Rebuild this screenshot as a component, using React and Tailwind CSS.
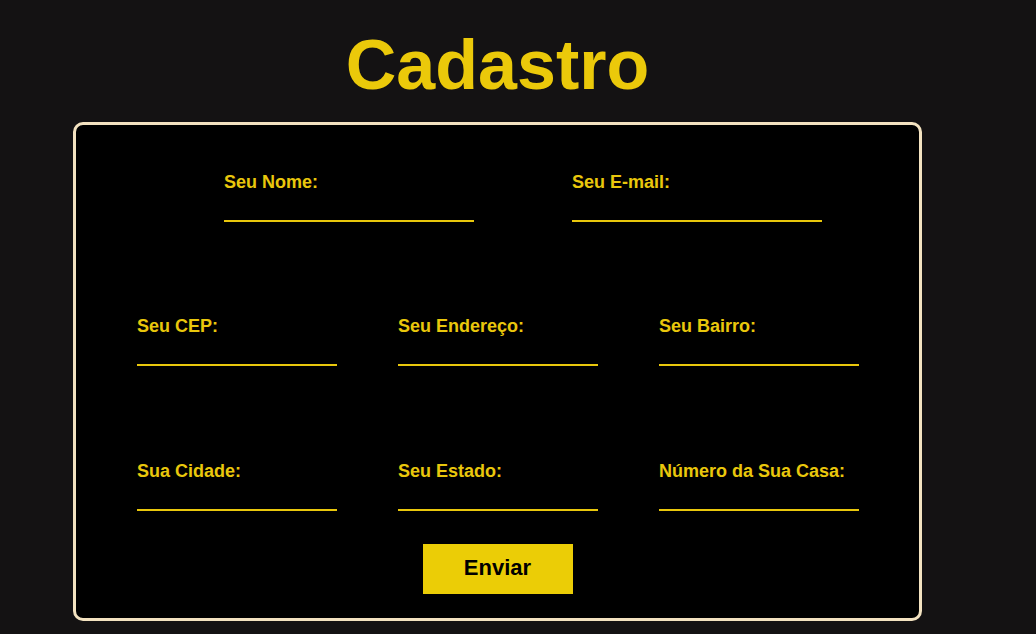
const linhas = [
  ['Seu CEP:', 'Seu Endereço:', 'Seu Bairro:'],
  ['Sua Cidade:', 'Seu Estado:', 'Número da Sua Casa:'],
];

function Campo({ label, largura }) {
  return (
    <label className={`flex flex-col ${largura}`}>
      <span className="text-[18px] leading-[20px] font-bold text-[#e9c70c]">{label}</span>
      <input
        type="text"
        className="h-[30px] bg-transparent border-0 border-b-2 border-[#e9c70c] outline-none text-[#e9c70c]"
      />
    </label>
  );
}

export default function App() {
  return (
    <div
      className="min-h-[634px] bg-[#141213] pt-[30px]"
      style={{ fontFamily: '"Liberation Sans", Arial, sans-serif' }}
    >
      <div className="w-[849px] ml-[73px]">
        <h1 className="text-center text-[70px] leading-[70px] font-bold text-[#ebc90a]">Cadastro</h1>

        <form className="mt-[22px] bg-black border-[3px] border-[#f3e2c0] rounded-[10px] pt-[47px] pb-[24px]">
          <div className="flex gap-[98px] pl-[148px]">
            <Campo label="Seu Nome:" largura="w-[250px]" />
            <Campo label="Seu E-mail:" largura="w-[250px]" />
          </div>

          <div className="mt-[94px] grid grid-cols-[200px_200px_200px] gap-x-[61px] pl-[61px]">
            {linhas[0].map(l => <Campo key={l} label={l} largura="w-[200px]" />)}
          </div>

          <div className="mt-[95px] grid grid-cols-[200px_200px_200px] gap-x-[61px] pl-[61px]">
            {linhas[1].map(l => <Campo key={l} label={l} largura="w-[200px]" />)}
          </div>

          <div className="mt-[33px] flex justify-center">
            <button type="button" className="w-[150px] h-[50px] bg-[#ebcd06] text-black text-[22px] leading-[22px] font-bold pb-[2px]">
              Enviar
            </button>
          </div>
        </form>
      </div>
    </div>
  );
}
